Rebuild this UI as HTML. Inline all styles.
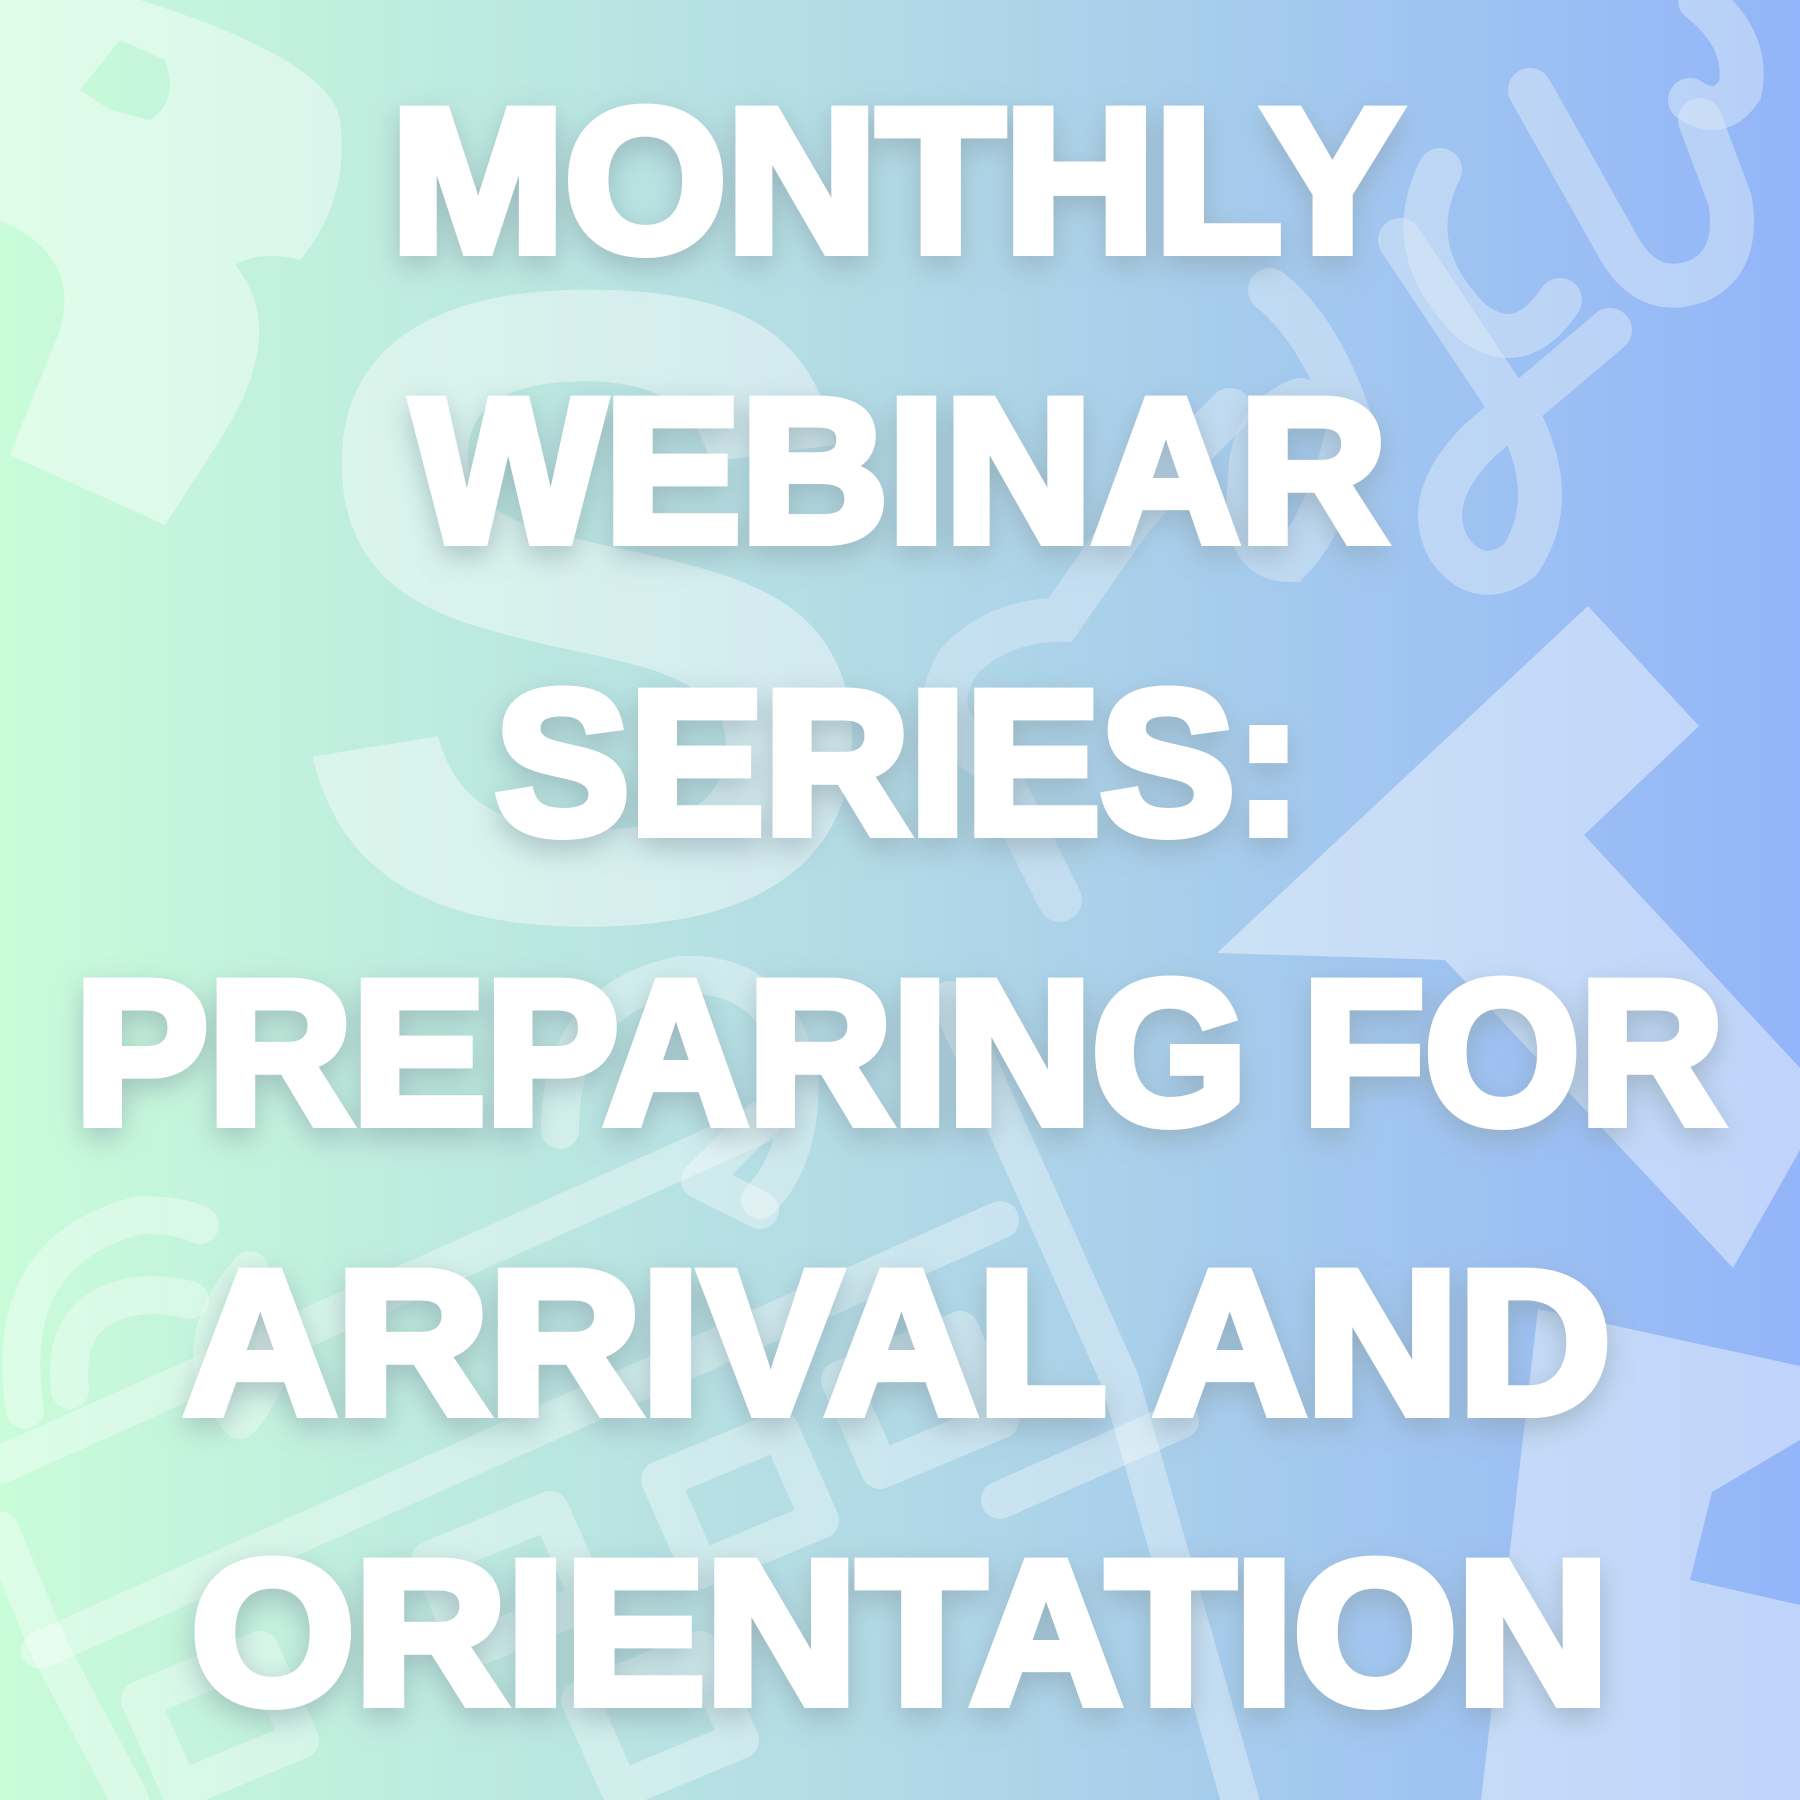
<!DOCTYPE html>
<html><head><meta charset="utf-8"><style>
html,body{margin:0;padding:0;width:1800px;height:1800px;overflow:hidden}
svg{display:block}
</style></head><body>
<svg width="1800" height="1800" viewBox="0 0 1800 1800" xmlns="http://www.w3.org/2000/svg">
<defs>
<linearGradient id="bg" x1="0" y1="0" x2="1" y2="0">
<stop offset="0" stop-color="#c9fcd9"/>
<stop offset="0.5" stop-color="#b1d9e6"/>
<stop offset="1" stop-color="#93b5f9"/>
</linearGradient>
<filter id="sh" x="-10%" y="-20%" width="120%" height="150%">
<feGaussianBlur in="SourceAlpha" stdDeviation="14"/>
<feOffset dx="0" dy="10"/>
<feComponentTransfer><feFuncA type="linear" slope="0.6"/></feComponentTransfer>
<feColorMatrix type="matrix" values="0 0 0 0 0.25  0 0 0 0 0.35  0 0 0 0 0.4  0 0 0 1 0"/>
<feMerge><feMergeNode/><feMergeNode in="SourceGraphic"/></feMerge>
</filter>
</defs>
<rect width="1800" height="1800" fill="url(#bg)"/>
<g fill="#fff" fill-opacity="0.42">
<path d="M45 0 L140 0 Q330 60 340 120 Q350 200 300 260 Q260 250 235 265 Q290 330 220 440 L165 525 L10 455 L60 330 Q80 260 10 225 L0 220 L0 0 Z M120 40 L165 60 Q180 100 150 120 L110 110 L80 90 Z" fill-rule="evenodd"/>
<text x="587" y="918" font-family="Liberation Sans, sans-serif" font-weight="bold" font-size="900" text-anchor="middle">S</text>
<path d="M1217 953 L1588 606 L1699 726 L1584 835 L1800 1068 L1800 1150 L1733 1268 L1445 960 Z"/>
<path d="M1538 1309 L1800 1366 L1800 1440 L1712 1492 L1690 1580 L1800 1605 L1800 1800 L1481 1800 Z"/>
</g>
<g fill="none" stroke="#fff" stroke-opacity="0.35" stroke-width="38" stroke-linecap="round" stroke-linejoin="round">
<path d="M0 1465 L760 1125"/>
<path d="M40 1650 L1000 1220"/>
<path d="M0 1530 L50 1650 L130 1800"/>
<path d="M25 1410 Q0 1250 140 1215 Q180 1215 200 1225"/>
<path d="M70 1390 Q60 1300 150 1295 Q170 1295 190 1300"/>
<path d="M250 1270 Q180 1350 240 1420 Q290 1360 270 1290"/>
<path d="M560 1130 Q560 1000 680 975 Q780 970 800 1080 Q800 1160 760 1200"/>
<path d="M760 1210 L700 1180 L760 1120"/>
<path d="M840 1380 L960 1330 L1000 1420 L880 1470 Z"/>
<path d="M660 1480 L780 1430 L820 1520 L700 1570 Z"/>
<path d="M430 1560 L550 1510 L590 1600 L470 1650 Z"/>
<path d="M140 1700 L260 1650 L300 1740 L180 1790 Z"/>
<path d="M580 1700 L700 1650 L740 1740 L620 1790 Z"/>
<path d="M950 1000 L1120 1380 L1240 1800"/>
<path d="M1000 1500 L1180 1420"/>
</g>
<g fill="none" stroke="#dce9f7" stroke-opacity="0.5" stroke-width="44" stroke-linecap="round">
<path d="M1530 90 L1620 250 Q1650 300 1700 280 Q1740 260 1730 200 L1700 120"/>
<path d="M1440 170 Q1400 250 1470 320 Q1520 360 1560 300"/>
<path d="M1400 240 L1520 420 Q1560 500 1520 560 Q1480 590 1450 550 Q1420 500 1480 440 L1610 330"/>
<path d="M1270 290 Q1320 330 1350 420 Q1330 520 1290 560 Q1240 560 1250 480 Q1250 420 1300 400"/>
<path d="M1230 410 L1190 450 L1130 520 L1060 620 Q1000 620 960 660 Q920 720 990 760 L1060 900"/>
<path d="M1700 0 Q1750 40 1740 90 Q1720 120 1690 100"/>
</g>
<g filter="url(#sh)" fill="#fff" stroke="#fff" stroke-width="10" stroke-linejoin="miter" font-family="Liberation Sans, sans-serif" font-weight="bold" font-size="204">
<text x="391" y="251" textLength="1011" lengthAdjust="spacingAndGlyphs">MONTHLY</text>
<text x="412" y="541" textLength="975" lengthAdjust="spacingAndGlyphs">WEBINAR</text>
<text x="495" y="833" textLength="807" lengthAdjust="spacingAndGlyphs">SERIES:</text>
<text x="75" y="1123" textLength="1649" lengthAdjust="spacingAndGlyphs">PREPARING FOR</text>
<text x="184" y="1413" textLength="1427" lengthAdjust="spacingAndGlyphs">ARRIVAL AND</text>
<text x="191" y="1703" textLength="1418" lengthAdjust="spacingAndGlyphs">ORIENTATION</text>
</g>
</svg>
</body></html>
